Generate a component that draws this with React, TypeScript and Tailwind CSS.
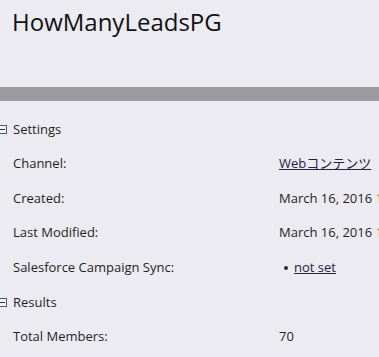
import React from 'react';

const font = { fontFamily: '"Open Sans", "Noto Sans CJK JP", sans-serif' };

function Expander() {
  return (
    <span className="relative -ml-[3px] mr-[6px] inline-block h-[9px] w-[10px] border border-[#4a5a7a] bg-[#f4f4f8]">
      <span className="absolute left-[2px] top-[3px] h-px w-[5px] bg-[#2c3550]" />
    </span>
  );
}

function Section({ title }: { title: string }) {
  return (
    <div className="flex h-[34.6px] items-center text-[13px] text-[#1f1f24]">
      <Expander />
      <span>{title}</span>
    </div>
  );
}

function Row({ label, children }: { label: string; children: React.ReactNode }) {
  return (
    <div className="flex h-[34.6px] items-center text-[13px] text-[#1f1f24]">
      <span className="w-[279px] shrink-0 pl-[13px]">{label}</span>
      <span className="whitespace-nowrap">{children}</span>
    </div>
  );
}

export default function App() {
  return (
    <div className="h-[357px] w-[379px] overflow-hidden bg-[#ecebf2]" style={font}>
      <div className="h-[87px] pl-[12px] pt-[6px]">
        <h1 className="text-[24px] leading-[32px] text-[#111]">HowManyLeadsPG</h1>
      </div>
      <div className="h-[14px] bg-[#9c9ba0]" />
      <div className="pt-[11px]">
        <Section title="Settings" />
        <Row label="Channel:">
          <span className="text-[#23233f] underline">Webコンテンツ</span>
        </Row>
        <Row label="Created:">
          March 16, 2016 <span className="text-[#c98a1a]">10:52 AM</span>
        </Row>
        <Row label="Last Modified:">
          March 16, 2016 <span className="text-[#c98a1a]">10:52 AM</span>
        </Row>
        <Row label="Salesforce Campaign Sync:">
          <span className="ml-[5px] mr-[6px] inline-block h-[4px] w-[4px] translate-y-[-2px] rounded-full bg-[#2a2a40]" />
          <span className="text-[#23233f] underline">not set</span>
        </Row>
        <Section title="Results" />
        <Row label="Total Members:">70</Row>
      </div>
    </div>
  );
}
